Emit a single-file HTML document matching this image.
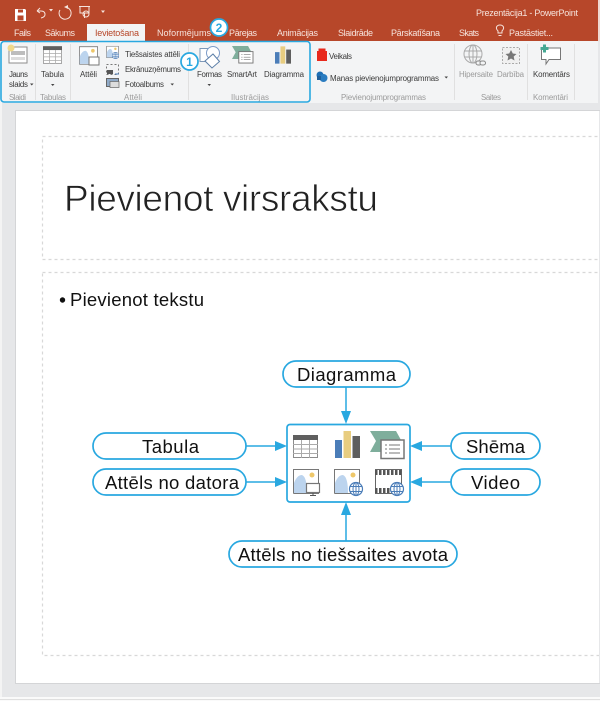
<!DOCTYPE html>
<html><head><meta charset="utf-8"><style>
html,body{margin:0;padding:0;background:#fff}
svg{display:block}
text{font-family:"Liberation Sans","DejaVu Sans",sans-serif}
.t{font-size:9px;fill:#f6e3dc}
.r{font-size:7.9px;fill:#3a3a3a}
.d{font-size:7.9px;fill:#9a9a9a}
.p{font-size:18.5px;fill:#111}
</style></head><body>
<svg width="600" height="701" viewBox="0 0 600 701" xmlns="http://www.w3.org/2000/svg">
<defs>
<symbol id="table" viewBox="0 0 25 23" overflow="visible">
<rect x=".5" y=".5" width="24" height="22" fill="#fff" stroke="#8c8c8c"/>
<rect x="0" y="0" width="25" height="5" fill="#5f5f5f"/>
<path d="M0 9.500H25M0 14H25M0 18.500H25M8.500 5V23M16.500 5V23" stroke="#aaa" fill="none"/>
</symbol>
<symbol id="bars" viewBox="0 0 25 27" overflow="visible">
<rect x="0" y="9" width="7" height="18" fill="#4b7db8"/>
<rect x="8.500" y="0" width="7.500" height="27" fill="#e8cd80"/>
<rect x="17.500" y="5" width="7.500" height="22" fill="#5e5e5e"/>
</symbol>
<symbol id="smart" viewBox="0 0 34 29" overflow="visible">
<path d="M0 0L6 10L0 21H11V9H31L26 0Z" fill="#7fae9c"/>
<rect x="11" y="9" width="23" height="18.500" fill="#fff" stroke="#777" stroke-width="1.500"/>
<path d="M15 14h2M19 14h11M15 18h2M19 18h11M15 22h2M19 22h11" stroke="#777" fill="none"/>
</symbol>
<symbol id="pic" viewBox="0 0 26 25" overflow="visible">
<path d="M.5 24.500V.5H25.500V14" fill="#fff" stroke="#777"/>
<rect x="1" y="1" width="24" height="23" fill="#fff"/>
<path d="M.5 24.500V.5H25.500V24.500H.5" fill="none" stroke="#777"/>
<circle cx="19" cy="6" r="2.500" fill="#eec769"/>
<path d="M1 24V14Q4 6 9 6Q14 8 14 24Z" fill="#bcd4ee"/>
</symbol>
<symbol id="globe" viewBox="0 0 14 14" overflow="visible">
<circle cx="7" cy="7" r="6.500" fill="#fff" stroke="#4b7db8" stroke-width="1.200"/>
<ellipse cx="7" cy="7" rx="3" ry="6.500" fill="none" stroke="#4b7db8"/>
<path d="M1 4.500H13M1 9.500H13M7 .5V13.500" stroke="#4b7db8" fill="none"/>
</symbol>
</defs>

<!-- backgrounds -->
<rect width="600" height="701" fill="#e6e7e9"/>
<rect x="0" y="0" width="2" height="701" fill="#f4f4f4"/>
<rect x="0" y="697" width="600" height="4" fill="#fafafa"/>
<rect x="0" y="699" width="600" height="1" fill="#dfdfdf"/>
<rect x="15.500" y="110.500" width="584" height="573" fill="#fff" stroke="#d4d5d7"/>
<rect x="0" y="0" width="598" height="41" fill="#b7472a"/>
<rect x="598" y="0" width="2" height="41" fill="#f0d8d0"/>
<rect x="0" y="41" width="598" height="62" fill="#f3f4f5"/>

<!-- QAT -->
<path d="M15 9H25L26 10V21H15Z" fill="#fff"/><rect x="18" y="9.500" width="5" height="3" fill="#b7472a"/><rect x="17.500" y="15.500" width="6" height="5" fill="#b7472a"/>
<path d="M37 11L40 8M37 11L40 13M37 11H41Q45 11 45 14.500Q45 17 41 18" fill="none" stroke="#f6e3dc" stroke-width="1"/>
<path d="M49 9h4l-2 2.500z" fill="#f6e3dc"/>
<path d="M67 7.500A6 6 0 1 1 60 10" fill="none" stroke="#f6e3dc" stroke-width="1"/><path d="M64 7l4-2v4z" fill="#f6e3dc"/>
<path d="M79 6.500H90M80 7V13H89V7M84.500 13V18" fill="none" stroke="#f6e3dc" stroke-width="1"/><circle cx="86" cy="14" r="3" fill="none" stroke="#f6e3dc"/>
<path d="M101 10.500h4l-2 2.500z" fill="#f6e3dc"/>
<text class="t" x="476" y="16" textLength="102">Prezentācija1 - PowerPoint</text>

<!-- tabs -->
<rect x="87" y="24" width="58" height="18" fill="#f3f4f5"/>
<text class="t" x="14" y="36" textLength="17">Fails</text>
<text class="t" x="45" y="36" textLength="30">Sākums</text>
<text x="95" y="36" textLength="44" style="font-size:9px;fill:#b7472a">Ievietošana</text>
<text class="t" x="157" y="36" textLength="54">Noformējums</text>
<text class="t" x="229" y="36" textLength="28">Pārejas</text>
<text class="t" x="277" y="36" textLength="41">Animācijas</text>
<text class="t" x="338" y="36" textLength="35">Slaidrāde</text>
<text class="t" x="391" y="36" textLength="49">Pārskatīšana</text>
<text class="t" x="459" y="36" textLength="20">Skats</text>
<path d="M498 33V31Q496 29 496.500 27Q497.500 25 500 25Q502.500 25 503.500 27Q504 29 502 31V33ZM498.500 35.500H501.500" fill="none" stroke="#f6e3dc"/>
<text class="t" x="509" y="36" textLength="44">Pastāstiet...</text>

<!-- separators -->
<path d="M35.500 44V100M70.500 44V100M188.500 44V100M454.500 44V100M527.500 44V100M574.500 44V100" stroke="#e0e0e0"/>

<!-- ribbon icons -->
<rect x="9" y="47" width="18" height="16" fill="#fff" stroke="#8c8c8c"/><rect x="11" y="51" width="14" height="4" fill="#bdbdbd"/><rect x="11" y="57" width="14" height="3" fill="#dcdcdc"/>
<circle cx="11" cy="48" r="3.500" fill="#f1d98a"/>
<use href="#table" x="43" y="46" width="19" height="18"/>
<use href="#pic" x="79" y="46" width="19" height="19"/>
<rect x="89" y="57" width="10" height="8" fill="#fff" stroke="#777"/>
<use href="#pic" x="106" y="46" width="13" height="12"/>
<use href="#globe" x="112" y="52" width="7" height="7"/>
<rect x="106.500" y="64.500" width="12" height="10" fill="none" stroke="#777" stroke-dasharray="2 2"/>
<rect x="107" y="70" width="6" height="4" fill="#555"/>
<path d="M115 74h4" stroke="#4b7db8"/>
<rect x="106.500" y="78.500" width="12" height="8" fill="#8faac8" stroke="#666"/>
<rect x="110" y="81.500" width="9" height="6" fill="#ddd" stroke="#666" stroke-width=".7"/>
<rect x="200" y="48.500" width="13" height="13" fill="#fff" stroke="#7d98b8"/>
<circle cx="213" cy="53" r="6.500" fill="#fff" stroke="#7d9cc8"/>
<path d="M213 54L219.500 61.500L212 68L205 61Z" fill="#fff" stroke="#5c7fa8"/>
<use href="#smart" x="232" y="46" width="21" height="18"/>
<use href="#bars" x="275" y="46" width="16" height="18"/>
<rect x="317" y="51" width="10" height="10" fill="#e8291c"/><path d="M319 51V49H325V51" fill="#e8291c" stroke="#e8291c"/>
<circle cx="320" cy="75" r="3.500" fill="#1e6fb5"/><circle cx="323.500" cy="78" r="4" fill="#2a7cc0"/><rect x="317" y="76" width="4" height="4" fill="#1e5f9a"/>
<circle cx="473" cy="54" r="9" fill="none" stroke="#aaa"/><ellipse cx="473" cy="54" rx="4" ry="9" fill="none" stroke="#aaa"/><path d="M464.500 51H481.500M464.500 57H481.500M473 45V63" stroke="#aaa" fill="none"/>
<rect x="476" y="61" width="5.500" height="4" rx="2" fill="#f3f4f5" stroke="#888"/><rect x="480" y="61" width="5.500" height="4" rx="2" fill="#f3f4f5" stroke="#888"/>
<rect x="502.500" y="47.500" width="17" height="16" fill="#f0f0f0" stroke="#aaa" stroke-dasharray="2 1.500"/>
<path d="M511 50L512.800 53.500L516.500 54L513.700 56.500L514.500 60.500L511 58.500L507.500 60.500L508.300 56.500L505.500 54L509.200 53.500Z" fill="#777"/>
<path d="M541.500 48H560.500V59.500H549L546 64V59.500H541.500Z" fill="#fff" stroke="#777"/>
<path d="M544.500 44.500V52.500M540.500 48.500H548.500" stroke="#46a893" stroke-width="3"/>

<!-- ribbon text -->
<text class="r" x="9" y="77" textLength="19">Jauns</text>
<text class="r" x="9" y="87" textLength="19">slaids</text>
<path d="M30 83.500h3.500l-1.750 2z" fill="#444"/>
<text class="d" x="9" y="100" textLength="17">Slaidi</text>
<text class="r" x="41" y="77" textLength="23">Tabula</text>
<path d="M51 84h3.500l-1.750 2z" fill="#444"/>
<text class="d" x="40" y="100" textLength="26">Tabulas</text>
<text class="r" x="80" y="77" textLength="17">Attēli</text>
<text class="r" x="125" y="57" textLength="55">Tiešsaistes attēli</text>
<text class="r" x="125" y="72" textLength="56">Ekrānuzņēmums</text>
<text class="r" x="125" y="87" textLength="39">Fotoalbums</text>
<path d="M170.500 83.500h3.500l-1.750 2z" fill="#444"/>
<text class="d" x="124" y="100" textLength="18">Attēli</text>
<text class="r" x="197" y="77" textLength="25">Formas</text>
<path d="M207.500 84h3.500l-1.750 2z" fill="#444"/>
<text class="r" x="227" y="77" textLength="30">SmartArt</text>
<text class="r" x="264" y="77" textLength="40">Diagramma</text>
<text class="d" x="231" y="100" textLength="38">Ilustrācijas</text>
<text class="r" x="329" y="59" textLength="23">Veikals</text>
<text class="r" x="330" y="81" textLength="109">Manas pievienojumprogrammas</text>
<path d="M444.500 76.500h3.500l-1.750 2z" fill="#444"/>
<text class="d" x="341" y="100" textLength="85">Pievienojumprogrammas</text>
<text class="d" x="459" y="77" textLength="34">Hipersaite</text>
<text class="d" x="497" y="77" textLength="27">Darbība</text>
<text class="d" x="481" y="100" textLength="20">Saites</text>
<text class="r" x="533" y="77" textLength="37">Komentārs</text>
<text class="d" x="533" y="100" textLength="35">Komentāri</text>

<!-- blue callout -->
<rect x="1" y="41.500" width="309" height="60.500" rx="3" fill="none" stroke="#29a8e0" stroke-width="1.600"/>
<circle cx="189.500" cy="61.500" r="8.500" fill="#fff" stroke="#29a8e0" stroke-width="1.700"/>
<text x="189.500" y="66" text-anchor="middle" style="font-size:12px;font-weight:bold;fill:#29a8e0">1</text>
<circle cx="219" cy="27.500" r="8.500" fill="#fff" stroke="#29a8e0" stroke-width="1.700"/>
<text x="219" y="32" text-anchor="middle" style="font-size:12px;font-weight:bold;fill:#29a8e0">2</text>

<!-- slide placeholders -->
<rect x="42.500" y="136.500" width="570" height="123" fill="none" stroke="#d8d8d8" stroke-width="1.200" stroke-dasharray="3 3"/>
<rect x="42.500" y="272.500" width="570" height="383" fill="none" stroke="#d8d8d8" stroke-width="1.200" stroke-dasharray="3 3"/>
<rect x="599" y="111" width="1" height="572" fill="#e6e7e9"/>
<text x="64" y="211" textLength="314" stroke="#fff" stroke-width=".7" style="font-size:37px;fill:#222">Pievienot virsrakstu</text>
<circle cx="62.500" cy="300" r="2.700" fill="#111"/>
<text x="70" y="306" textLength="134" style="font-size:18.500px;fill:#111">Pievienot tekstu</text>

<!-- diagram connectors -->
<path d="M346 387V418M246 446H280M246 482H280M451 446H416M451 482H416M346 541V508" fill="none" stroke="#29a8e0" stroke-width="1.500"/>
<rect x="287" y="424.500" width="123" height="77.500" rx="3" fill="#fff" stroke="#29a8e0" stroke-width="1.700"/>
<g fill="#29a8e0">
<path d="M346 424L341 411H351Z"/>
<path d="M346 502L341 515H351Z"/>
<path d="M287 446L275 441V451Z"/><path d="M287 482L275 477V487Z"/>
<path d="M410 446L422 441V451Z"/><path d="M410 482L422 477V487Z"/>
</g>

<!-- center icons -->
<use href="#table" x="293" y="435" width="25" height="23"/>
<use href="#bars" x="335" y="431" width="25" height="27"/>
<use href="#smart" x="370" y="431" width="34" height="29"/>
<use href="#pic" x="293" y="469" width="26" height="25"/>
<rect x="306.500" y="483.500" width="13" height="9" fill="#fff" stroke="#777" stroke-width="1.200"/>
<path d="M313 493V495M310 495.500H316" stroke="#555"/>
<use href="#pic" x="334" y="469" width="26" height="25"/>
<use href="#globe" x="349" y="482" width="14" height="14"/>
<rect x="375.500" y="469.500" width="26" height="24" fill="#fff" stroke="#666"/>
<path d="M375 472.500H402M375 490.500H402" stroke="#555" stroke-width="5" stroke-dasharray="2.500 1.500" fill="none"/>
<use href="#globe" x="390" y="482" width="14" height="14"/>

<!-- pills -->
<g fill="#fff" stroke="#29a8e0" stroke-width="1.700">
<rect x="283" y="361" width="127" height="26" rx="13"/>
<rect x="93" y="433" width="153" height="26" rx="13"/>
<rect x="93" y="469" width="153" height="26" rx="13"/>
<rect x="451" y="433" width="89" height="26" rx="13"/>
<rect x="451" y="469" width="89" height="26" rx="13"/>
<rect x="229" y="541" width="228" height="26" rx="13"/>
</g>
<text class="p" x="297" y="381" textLength="99">Diagramma</text>
<text class="p" x="142" y="453" textLength="57">Tabula</text>
<text class="p" x="105" y="489" textLength="134">Attēls no datora</text>
<text class="p" x="466" y="453" textLength="59">Shēma</text>
<text class="p" x="471" y="489" textLength="49">Video</text>
<text class="p" x="238" y="561" textLength="210">Attēls no tiešsaites avota</text>
</svg>
</body></html>
